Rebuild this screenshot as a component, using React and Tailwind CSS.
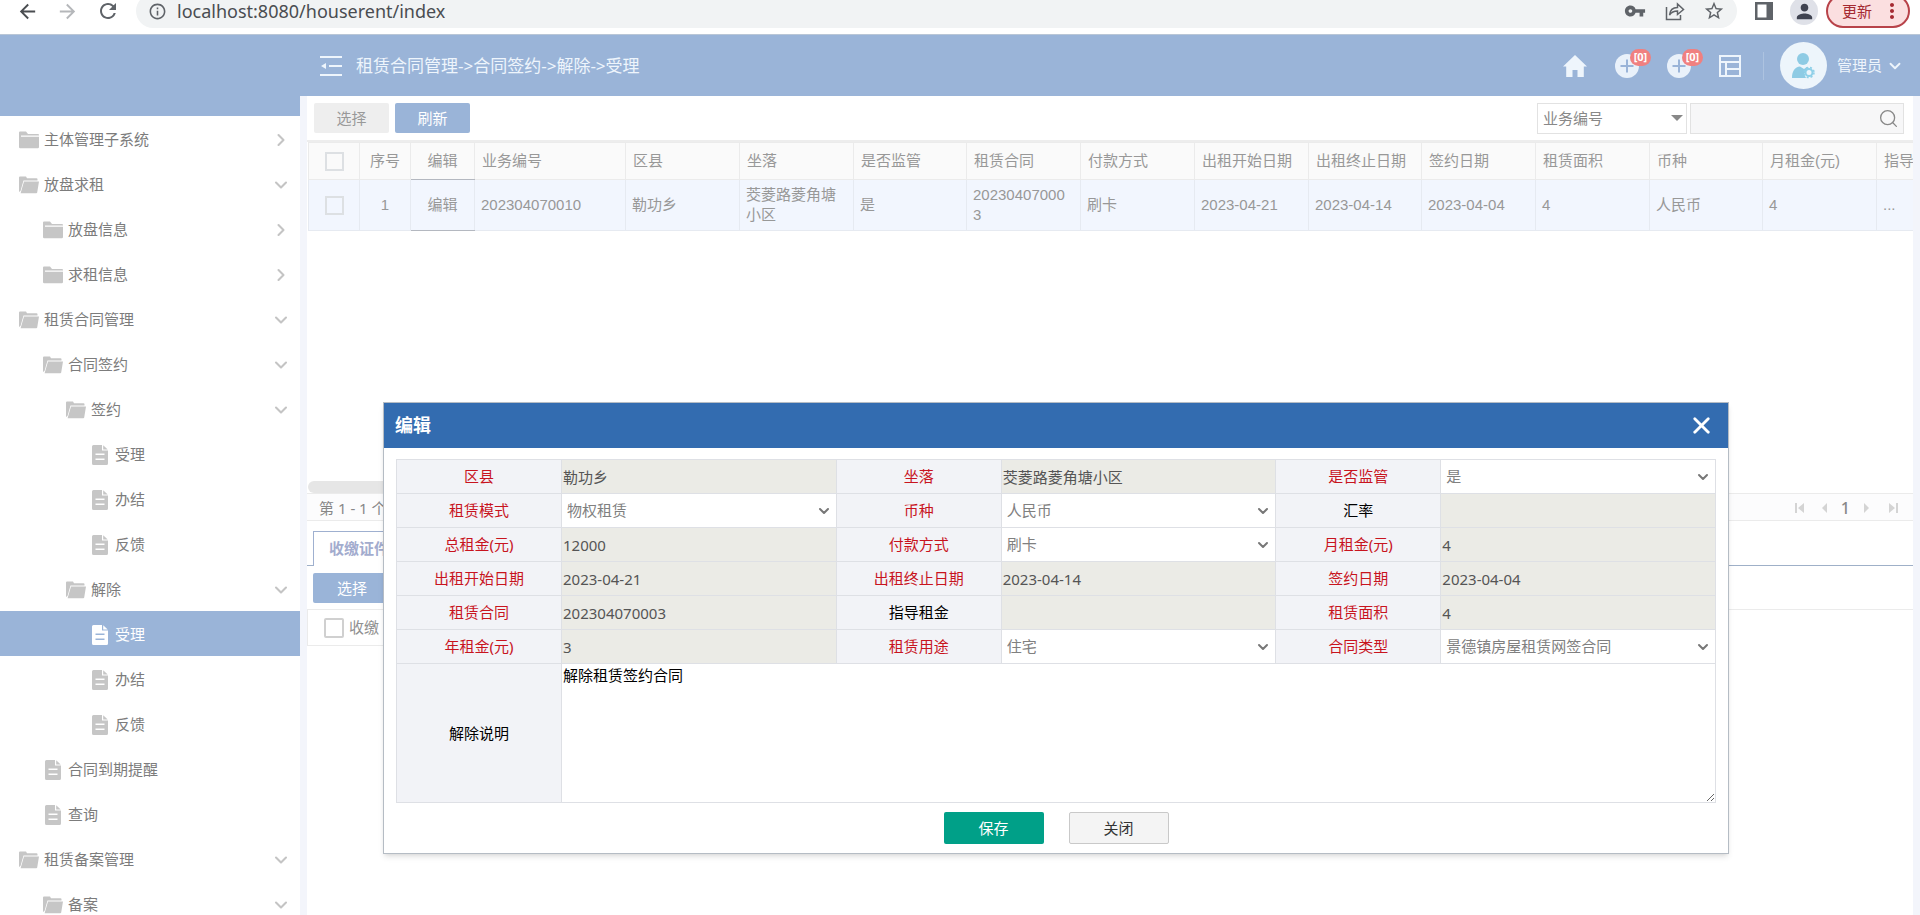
import { useState } from 'react';
import { ChevronDown, ChevronRight, Search, X } from 'lucide-react';
import {
  MdArrowBack,
  MdArrowForward,
  MdRefresh,
  MdInfoOutline,
  MdVpnKey,
  MdStarBorder,
  MdPerson,
  MdMoreVert,
} from 'react-icons/md';

const menu = [
  { label: '主体管理子系统', level: 0, type: 'closed' },
  { label: '放盘求租', level: 0, type: 'open' },
  { label: '放盘信息', level: 1, type: 'closed' },
  { label: '求租信息', level: 1, type: 'closed' },
  { label: '租赁合同管理', level: 0, type: 'open' },
  { label: '合同签约', level: 1, type: 'open' },
  { label: '签约', level: 2, type: 'open' },
  { label: '受理', level: 3, type: 'file' },
  { label: '办结', level: 3, type: 'file' },
  { label: '反馈', level: 3, type: 'file' },
  { label: '解除', level: 2, type: 'open' },
  { label: '受理', level: 3, type: 'file', active: true },
  { label: '办结', level: 3, type: 'file' },
  { label: '反馈', level: 3, type: 'file' },
  { label: '合同到期提醒', level: 1, type: 'file' },
  { label: '查询', level: 1, type: 'file' },
  { label: '租赁备案管理', level: 0, type: 'open' },
  { label: '备案', level: 1, type: 'open' },
];

const indents = ['pl-[18px]', 'pl-[42px]', 'pl-[65px]', 'pl-[89px]'];

const columns = [
  { title: '业务编号', value: '202304070010', width: 'w-[151px]' },
  { title: '区县', value: '勒功乡', width: 'w-[114px]' },
  { title: '坐落', value: '茭菱路菱角塘小区', width: 'w-[114px]' },
  { title: '是否监管', value: '是', width: 'w-[113px]' },
  { title: '租赁合同', value: '202304070003', width: 'w-[114px]' },
  { title: '付款方式', value: '刷卡', width: 'w-[114px]' },
  { title: '出租开始日期', value: '2023-04-21', width: 'w-[114px]' },
  { title: '出租终止日期', value: '2023-04-14', width: 'w-[113px]' },
  { title: '签约日期', value: '2023-04-04', width: 'w-[114px]' },
  { title: '租赁面积', value: '4', width: 'w-[114px]' },
  { title: '币种', value: '人民币', width: 'w-[113px]' },
  { title: '月租金(元)', value: '4', width: 'w-[114px]' },
  { title: '指导租金', value: '...', width: 'w-[114px]' },
];

const formRows = [
  [
    { id: 'district', label: '区县', value: '勒功乡', required: true },
    { id: 'address', label: '坐落', value: '茭菱路菱角塘小区', required: true },
    { id: 'supervised', label: '是否监管', value: '是', required: true, select: true },
  ],
  [
    { id: 'mode', label: '租赁模式', value: '物权租赁', required: true, select: true },
    { id: 'currency', label: '币种', value: '人民币', required: true, select: true },
    { id: 'rate', label: '汇率', value: '' },
  ],
  [
    { id: 'total', label: '总租金(元)', value: '12000', required: true },
    { id: 'payment', label: '付款方式', value: '刷卡', required: true, select: true },
    { id: 'monthly', label: '月租金(元)', value: '4', required: true },
  ],
  [
    { id: 'start', label: '出租开始日期', value: '2023-04-21', required: true },
    { id: 'end', label: '出租终止日期', value: '2023-04-14', required: true },
    { id: 'signed', label: '签约日期', value: '2023-04-04', required: true },
  ],
  [
    { id: 'contract', label: '租赁合同', value: '202304070003', required: true },
    { id: 'guide', label: '指导租金', value: '' },
    { id: 'area', label: '租赁面积', value: '4', required: true },
  ],
  [
    { id: 'yearly', label: '年租金(元)', value: '3', required: true },
    { id: 'usage', label: '租赁用途', value: '住宅', required: true, select: true },
    { id: 'type', label: '合同类型', value: '景德镇房屋租赁网签合同', required: true, select: true },
  ],
];

function MenuIcon({ type }) {
  if (type === 'file') {
    return (
      <svg viewBox="0 0 20 20" className="w-[22px] h-5 shrink-0" fill="currentColor">
        <path
          fillRule="evenodd"
          d="M3.500 0H12v5.500h6V18.500a1.500 1.500 0 0 1-1.500 1.500h-13A1.500 1.500 0 0 1 2 18.500v-17A1.500 1.500 0 0 1 3.500 0zM5.500 8.500v1.400h9V8.500zm0 5v1.400h9v-1.400z"
        />
        <path d="M13.200.3l4.500 4.200h-4.500z" />
      </svg>
    );
  }
  if (type === 'open') {
    return (
      <svg viewBox="0 0 22 18" className="w-[22px] h-[18px] shrink-0" fill="currentColor">
        <path d="M1 1.500A1 1 0 0 1 2 .5h6l1 1.700h9.500a1 1 0 0 1 1 1V4.500H5.500L2.500 15 1 16z" />
        <path d="M6 5.500H21l-1.800 11a1 1 0 0 1-1 .8H2.600z" />
      </svg>
    );
  }
  return (
    <svg viewBox="0 0 22 18" className="w-[22px] h-[18px] shrink-0" fill="currentColor">
      <path d="M1 1.500A1 1 0 0 1 2 .5h6L10 3h10a1 1 0 0 1 1 1v.6H3V5.800h18V16a1.300 1.300 0 0 1-1.300 1.300H2.300A1.300 1.300 0 0 1 1 16z" />
    </svg>
  );
}

function BrowserBar() {
  return (
    <div className="h-[35px] shrink-0 overflow-hidden border-b border-[#b9c6d6] bg-white">
      <div className="-mt-[6px] flex h-[34px] items-center text-[#5f6368]">
        <button aria-label="后退" className="ml-4 w-6 text-[#4a4d51]"><MdArrowBack size={23} /></button>
        <button aria-label="前进" className="ml-4 w-6 text-[#b5b7ba]"><MdArrowForward size={23} /></button>
        <button aria-label="重新加载" className="ml-4 w-6"><MdRefresh size={24} /></button>
        <div className="ml-4 flex h-full flex-1 items-center rounded-full bg-[#f1f3f4] pl-3 pr-3">
          <MdInfoOutline size={19} />
          <input
            aria-label="地址"
            defaultValue="localhost:8080/houserent/index"
            className="ml-[10px] flex-1 bg-transparent text-[18px] text-[#4a4d51] outline-none"
          />
          <MdVpnKey size={22} />
          <svg viewBox="0 0 20 20" className="ml-[19px] size-5" fill="none" stroke="currentColor" strokeWidth="1.500">
            <path d="M1.500 6v12.500h14V14M4.500 14c.5-5 3.500-7.500 8-7.500V3l6 5.500-6 5V10c-3.500 0-6 1-8 4z" />
          </svg>
          <MdStarBorder size={22} className="ml-[18px]" />
        </div>
        <svg viewBox="0 0 18 18" className="ml-[18px] size-[18px]" fill="currentColor">
          <path fillRule="evenodd" d="M0 0h18v18H0zM2.500 2.500v13h9v-13z" />
        </svg>
        <div className="ml-[17px] flex size-7 items-center justify-center rounded-full bg-[#dfe1e8] text-[#3f4350]">
          <MdPerson size={23} />
        </div>
        <button className="ml-2 mr-[10px] flex h-[34px] w-[84px] items-center rounded-full border-2 border-[#b8434a] bg-[#fbdfe0] pl-[14px] text-[15px] text-[#a52a32]">
          更新
          <MdMoreVert size={24} className="ml-[8px] shrink-0" />
        </button>
      </div>
    </div>
  );
}

function Sidebar() {
  return (
    <nav className="h-full w-[300px] shrink-0 overflow-hidden bg-white">
      <div className="h-[81px] bg-[#9ab4d8]" />
      {menu.map((item, i) => (
        <a
          key={i}
          href="#"
          className={`flex h-[45px] items-center pr-[9px] pt-[2px] text-[15px] ${indents[item.level]} ${
            item.active ? 'bg-[#9ab4d8] text-white' : 'text-[#7c7c7c]'
          }`}
        >
          <span className={item.active ? 'text-white' : 'text-[#c6c6c6]'}>
            <MenuIcon type={item.type} />
          </span>
          <span className="ml-1 flex-1">{item.label}</span>
          {item.type === 'closed' && <ChevronRight size={20} strokeWidth={2.5} className="text-[#c4c4c4]" />}
          {item.type === 'open' && <ChevronDown size={20} strokeWidth={2.5} className="text-[#c4c4c4]" />}
        </a>
      ))}
    </nav>
  );
}

function PlusBadge() {
  return (
    <button aria-label="新增" className="relative ml-7 size-6 rounded-full bg-[#e9f1fa]">
      <svg viewBox="0 0 24 24" className="size-6" stroke="#9ab4d8" strokeWidth="2">
        <path d="M12 5.500v13M5.500 12h13" />
      </svg>
      <span className="absolute -top-[5px] left-[15px] flex h-[17px] w-[21px] items-center justify-center rounded-full bg-[#f08080] text-[11px] font-bold text-white">
        [0]
      </span>
    </button>
  );
}

function Header() {
  return (
    <header className="flex h-[61px] shrink-0 items-center bg-[#9ab4d8] pl-5 pr-4 text-[#eef5fc]">
      <button aria-label="收起菜单">
        <svg viewBox="0 0 22 20" className="h-5 w-[22px]" fill="currentColor">
          <path d="M0 0h22v2H0zM9 9h13v2H9zM0 18h22v2H0zM6 7v6L1 10z" />
        </svg>
      </button>
      <h1 className="ml-[14px] flex-1 text-[17px]">{'租赁合同管理->合同签约->解除->受理'}</h1>
      <a href="#" aria-label="首页">
        <svg viewBox="0 0 24 22" className="h-[22px] w-6" fill="currentColor">
          <path d="M12 0l12 11.500h-3.200V22h-6.300v-7h-5v7H3.200V11.500H0z" />
        </svg>
      </a>
      <PlusBadge />
      <PlusBadge />
      <button aria-label="布局" className="ml-7">
        <svg viewBox="0 0 22 22" className="size-[22px]" fill="none" stroke="currentColor" strokeWidth="2">
          <path d="M1 1h20v20H1zM1 7h20M7 7v14M7 14h14" />
        </svg>
      </button>
      <div className="ml-[22px] h-7 w-px bg-[#adc3e0]" />
      <div className="ml-4 flex size-[47px] items-center justify-center rounded-full bg-[#edf5fb]">
        <svg viewBox="0 0 24 26" className="h-[26px] w-6">
          <circle cx="12" cy="6" r="6" fill="#8ecbe4" />
          <path d="M1 25c0-7 3-11 8-11.500l4 2.500 3-2 2 1-5 6 2 4z" fill="#8ecbe4" />
          <circle cx="18" cy="19.500" r="3.500" fill="#edf5fb" stroke="#8fd0e8" strokeWidth="2" />
          <circle cx="18" cy="19.500" r="5" fill="none" stroke="#8fd0e8" strokeWidth="1.500" strokeDasharray="2 2" />
        </svg>
      </div>
      <button className="ml-[10px] flex items-center text-[15px]">
        管理员
        <ChevronDown size={18} strokeWidth={2.5} className="ml-1" />
      </button>
    </header>
  );
}

function Toolbar() {
  return (
    <div className="flex h-[46px] shrink-0 items-center border-b-2 border-[#ededed] pl-[7px] pr-[9px] text-[15px]">
      <button className="h-[30px] w-[75px] rounded-xs bg-[#eee] text-[#999]">选择</button>
      <button className="ml-[6px] h-[30px] w-[75px] rounded-xs bg-[#9ab4d8] text-white">刷新</button>
      <div className="relative ml-auto h-[31px] w-[150px]">
        <select aria-label="查询字段" className="h-full w-full appearance-none border border-[#e2e2e2] bg-white pl-[5px] text-[#888]">
          <option>业务编号</option>
        </select>
        <svg viewBox="0 0 12 6" className="pointer-events-none absolute right-1 top-3 h-[6px] w-3" fill="#888">
          <path d="M0 0h12L6 6z" />
        </svg>
      </div>
      <div className="relative ml-[3px] h-[31px] w-[214px]">
        <input aria-label="查询内容" className="h-full w-full border border-[#e2e2e2] bg-[#f7f7f8] pl-2 pr-8 outline-none" />
        <Search size={21} strokeWidth={1.5} className="pointer-events-none absolute right-[5px] top-[5px] text-[#888]" />
      </div>
    </div>
  );
}

function DataTable() {
  return (
    <div className="overflow-hidden pl-px font-['Liberation_Sans','Noto_Sans_CJK_SC',sans-serif]">
      <table className="w-[1683px] table-fixed border-collapse text-left text-[15px] text-[#989898]">
        <thead>
          <tr className="h-[37px] bg-[#fafafa]">
            <th className="w-[51px] border border-[#ebebeb] text-center">
              <input type="checkbox" aria-label="全选" className="block mx-auto size-[19px] appearance-none border-2 border-[#dde0e3]" />
            </th>
            <th className="w-[51px] border border-[#ebebeb] text-center font-normal">序号</th>
            <th className="w-[64px] border border-[#ebebeb] border-b-[#b4b8c0] text-center font-normal">编辑</th>
            {columns.map((col) => (
              <th key={col.title} className={`border border-[#ebebeb] pl-[7px] font-normal whitespace-nowrap ${col.width}`}>
                {col.title}
              </th>
            ))}
          </tr>
        </thead>
        <tbody>
          <tr className="h-[51px] bg-[#f2f6fe] leading-5">
            <td className="border border-[#e6eaf1]">
              <input type="checkbox" aria-label="选择第1行" className="block mx-auto size-[19px] appearance-none border-2 border-[#dde0e3]" />
            </td>
            <td className="border border-[#e6eaf1] text-center">1</td>
            <td className="border border-[#e6eaf1] border-b-[#b4b8c0] text-center">编辑</td>
            {columns.map((col) => (
              <td key={col.title} className="border border-[#e6eaf1] pl-[6px] pr-2 break-all">
                {col.value}
              </td>
            ))}
          </tr>
        </tbody>
      </table>
    </div>
  );
}

function Pager() {
  return (
    <div className="flex h-[28px] shrink-0 items-center border-y border-[#ebebeb] bg-[#fcfcfd] pl-[12px] pr-[15px] pt-[2px] text-[15px] text-[#888]">
      <span className="flex-1">第 1 - 1 个</span>
      <button aria-label="首页">
        <svg viewBox="0 0 9 10" className="h-[10px] w-[9px]" fill="#d4d4d4"><path d="M0 0h2v10H0zM9 0v10L3 5z" /></svg>
      </button>
      <button aria-label="上一页" className="ml-[18px]">
        <svg viewBox="0 0 5 10" className="h-[10px] w-[5px]" fill="#d4d4d4"><path d="M5 0v10L0 5z" /></svg>
      </button>
      <b className="mx-[14px] text-[16px] font-medium">1</b>
      <button aria-label="下一页">
        <svg viewBox="0 0 5 10" className="h-[10px] w-[5px]" fill="#d4d4d4"><path d="M0 0v10l5-5z" /></svg>
      </button>
      <button aria-label="末页" className="ml-[20px]">
        <svg viewBox="0 0 9 10" className="h-[10px] w-[9px]" fill="#d4d4d4"><path d="M7 0h2v10H7zM0 0v10l6-5z" /></svg>
      </button>
    </div>
  );
}

function DetailPanel() {
  return (
    <div className="flex-1">
      <div className="flex pt-[10px]">
        <div className="w-[6px] border-b border-[#9fb0c8]" />
        <button className="h-[35px] border border-b-0 border-[#9fb0d0] px-[15px] pb-px text-[15px] font-bold text-[#a3acce]">
          收缴证件
        </button>
        <div className="flex-1 border-b border-[#9fb0c8]" />
      </div>
      <div className="h-[44px] border-b border-[#ebebeb] pl-[6px] pt-[7px]">
        <button className="h-[30px] w-[78px] rounded-xs bg-[#9ab4d8] text-[15px] text-white">选择</button>
      </div>
      <label className="flex h-[36px] w-[400px] items-center border-b border-l border-[#ebebeb] pl-4 text-[15px] text-[#909090]">
        <input type="checkbox" className="mr-[5px] size-5 appearance-none rounded-xs border-2 border-[#d0d0d0]" />
        收缴
      </label>
    </div>
  );
}

function Field({ field }) {
  const { id, label, value, required, select } = field;
  return (
    <>
      <th className="w-[165px] border border-[#dee0e5] bg-[#f2f3f7] p-0 text-center font-normal">
        <label htmlFor={id} className={required ? 'text-[#c8141e]' : 'text-black'}>{label}</label>
      </th>
      <td className={`border border-[#dee0e5] p-0 ${select ? 'bg-white' : 'bg-[#ebebe6]'}`}>
        {select ? (
          <div className="relative">
            <select id={id} className="block h-8 w-full appearance-none bg-transparent pl-[5px] text-[#808080] outline-none">
              <option>{value}</option>
            </select>
            <ChevronDown size={16} strokeWidth={3} className="pointer-events-none absolute right-1 top-2 text-[#777]" />
          </div>
        ) : (
          <input id={id} readOnly value={value} className="block h-8 w-full bg-transparent pl-px text-[#555] outline-none" />
        )}
      </td>
    </>
  );
}

function EditDialog() {
  const [remark, setRemark] = useState('解除租赁签约合同');

  return (
    <div
      role="dialog"
      aria-label="编辑"
      className="absolute left-[383px] right-[191px] top-[402px] border border-[#b5bcc4] bg-white text-[15px] shadow-md"
    >
      <div className="flex h-[45px] items-center bg-[#336cb0] pl-[11px] pr-[13px] text-white">
        <h2 className="flex-1 text-[18px] font-bold">编辑</h2>
        <button aria-label="关闭窗口"><X size={27} strokeWidth={2.5} /></button>
      </div>
      <form className="px-3 pt-[11px] pb-[9px]" onSubmit={(e) => e.preventDefault()}>
        <table className="w-full table-fixed border-collapse">
          <tbody>
            {formRows.map((row) => (
              <tr key={row[0].id} className="h-[34px]">
                {row.map((field) => (
                  <Field key={field.id} field={field} />
                ))}
              </tr>
            ))}
            <tr>
              <th className="border border-[#dee0e5] bg-[#f2f3f7] text-center font-normal">
                <label htmlFor="remark">解除说明</label>
              </th>
              <td colSpan={5} className="border border-[#dee0e5] p-0">
                <textarea
                  id="remark"
                  value={remark}
                  onChange={(e) => setRemark(e.target.value)}
                  className="block h-[138px] w-full pl-px text-black outline-none"
                />
              </td>
            </tr>
          </tbody>
        </table>
        <div className="mt-[9px] flex justify-center gap-[25px]">
          <button type="submit" className="h-8 w-[100px] rounded-xs bg-[#00a088] text-white">保存</button>
          <button type="button" className="h-8 w-[100px] rounded-xs border border-[#c9c9c9] bg-[#f4f4f4] text-[#333]">关闭</button>
        </div>
      </form>
    </div>
  );
}

export default function App() {
  return (
    <div className="relative flex h-screen flex-col overflow-hidden bg-white font-['Noto_Sans','Noto_Sans_CJK_SC',sans-serif]">
      <BrowserBar />
      <div className="flex min-h-0 flex-1">
        <Sidebar />
        <div className="flex min-w-0 flex-1 flex-col">
          <Header />
          <div className="flex min-h-0 flex-1 bg-[#f3f5fb] pl-[7px] pr-[7px]">
            <main className="flex min-w-0 flex-1 flex-col bg-white">
              <Toolbar />
              <div className="h-[351px] shrink-0 flex flex-col justify-between">
                <DataTable />
                <div className="ml-px h-3 w-[1200px] rounded-full bg-[#e6e6e6]" />
              </div>
              <Pager />
              <DetailPanel />
            </main>
          </div>
        </div>
      </div>
      <EditDialog />
    </div>
  );
}
